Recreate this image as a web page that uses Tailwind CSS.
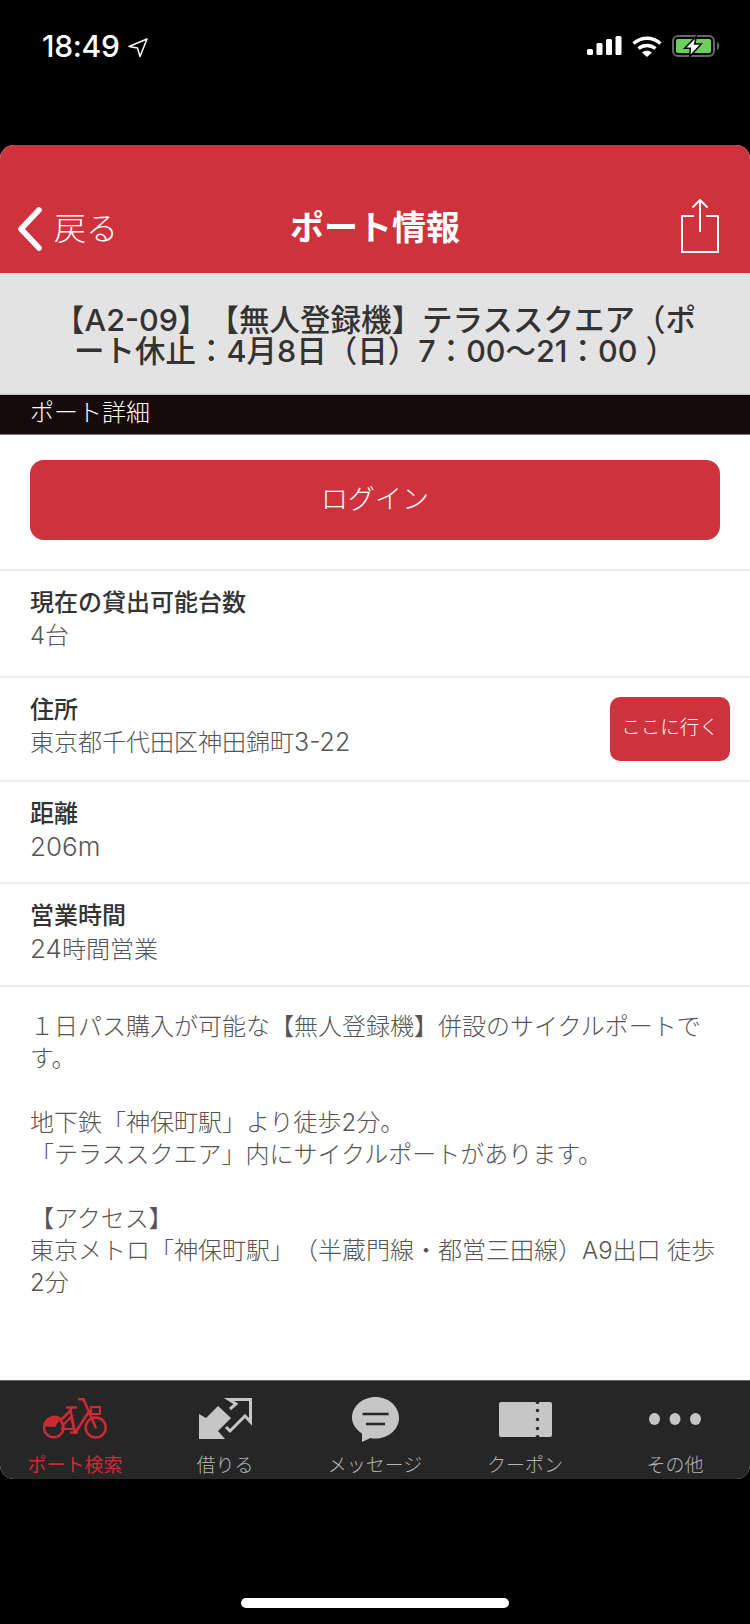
<!DOCTYPE html>
<html lang="ja">
<head>
  <meta charset="UTF-8" />
  <title>ポート情報</title>
  <script src="https://cdn.jsdelivr.net/npm/@tailwindcss/browser@4"></script>
</head>
<body class="bg-black w-[750px] h-[1624px] overflow-hidden font-['Inter','Noto_Sans_CJK_JP',sans-serif] [text-spacing-trim:space-all]">
  <!-- Status bar -->
  <div class="h-[145px] pt-[32px] pl-[42px] pr-[29px] flex items-start justify-between text-white">
    <div class="flex items-center gap-[8px] h-[28px]">
      <span class="text-[30px] leading-[28px] font-medium tracking-[-0.3px]">18:49</span>
      <svg class="mt-[3px]" width="20" height="20" viewBox="0 0 20 20"><path d="M1 8.500 19 1 12 18.500 9.500 10z" fill="none" stroke="#fff" stroke-width="1.500" stroke-linejoin="round"/></svg>
    </div>
    <div class="flex items-start gap-[10px] pt-[4px]">
      <svg width="35" height="20" viewBox="0 0 35 20" fill="#fff"><rect x="0" y="13" width="6" height="6" rx="1.500"/><rect x="9.500" y="7" width="6" height="12" rx="1.500"/><rect x="19" y="3" width="6" height="16" rx="1.500"/><rect x="28.500" y="0" width="6" height="19" rx="1.500"/></svg>
      <svg width="30" height="21" viewBox="0 0 30 21"><path d="M1.500 7.500c8-7 19-7 27 0M6.500 12.500c5-4 12-4 17 0" fill="none" stroke="#fff" stroke-width="3.500"/><path d="m10 16.500c3-2.500 7-2.500 10 0l-5 4.500z" fill="#fff"/></svg>
      <svg class="-mt-[1px]" width="49" height="22" viewBox="0 0 49 22"><rect x="1" y="1" width="41" height="20" rx="5" fill="none" stroke="#666" stroke-width="2"/><rect x="4" y="4" width="35" height="14" rx="2" fill="#6ad15f"/><path d="M45 7c3 1 3 7 0 8z" fill="#666"/><path d="M24.300 1.500 12.700 13.300h5.600l-.6 8.200L29.300 9h-6.600z" fill="#fff" stroke="#000" stroke-width="1.500"/></svg>
    </div>
  </div>

  <main class="w-[750px] h-[1334px] rounded-[14px] overflow-hidden bg-white flex flex-col">
    <!-- Nav -->
    <header class="h-[128px] shrink-0 bg-[#ce323c] text-white relative flex items-start pt-[59px]">
      <div class="flex items-center h-[50px] pl-[17px]">
        <svg width="26" height="44" viewBox="0 0 26 44"><path d="M22 3 4 22l18 19" fill="none" stroke="#fff" stroke-width="5.500" stroke-linecap="round" stroke-linejoin="round"/></svg>
        <span class="text-[32px] leading-[36px] ml-[11px] font-light">戻る</span>
      </div>
      <h1 class="absolute left-0 right-0 top-[61px] text-center text-[34px] leading-[44px] font-bold">ポート情報</h1>
      <svg class="absolute right-[31px] bottom-[20px]" width="38" height="54" viewBox="0 0 38 54"><path d="M13 17H1v36h36V17H25M19 1v32M11.500 8.500 19 1l7.500 7.500" fill="none" stroke="#fff" stroke-width="2"/></svg>
    </header>

    <!-- Port name -->
    <div class="h-[122px] shrink-0 bg-[#e3e3e3] border-b border-[#bdbdbd] flex items-center justify-center pt-[2px] text-center text-[30.500px] leading-[31px] font-medium text-[#333]">
      <p>【A2-09】【無人登録機】テラススクエア（ポ<br>ート休止：4月8日（日）7：00～21：00 ）</p>
    </div>
    <div class="h-[40px] shrink-0 bg-[#150b0c] border-b border-[#777] pl-[30px] text-[24px] leading-[36px] font-light text-white">ポート詳細</div>

    <!-- Login -->
    <div class="h-[136px] shrink-0 px-[30px] pt-[25px] border-b-2 border-[#ececec]">
      <button class="w-full h-[80px] rounded-[14px] bg-[#ce323c] text-white text-[27px] font-light">ログイン</button>
    </div>

    <!-- Details -->
    <div class="h-[107px] shrink-0 pl-[30px] pt-[15px] border-b-2 border-[#ececec]">
      <div class="text-[24px] leading-[33px] font-medium text-[#333]">現在の貸出可能台数</div>
      <div class="text-[24px] leading-[33px] font-light text-[#555]">4台</div>
    </div>
    <div class="h-[104px] shrink-0 pl-[30px] pr-[20px] pt-[15px] border-b-2 border-[#ececec] relative">
      <div class="text-[24px] leading-[33px] font-medium text-[#333]">住所</div>
      <div class="text-[24px] leading-[33px] font-light text-[#555]">東京都千代田区神田錦町<span class="text-[25px]">3-22</span></div>
      <button class="absolute right-[20px] top-[19px] w-[120px] h-[64px] pb-[2px] rounded-[10px] bg-[#ce323c] text-white text-[19.500px] font-light">ここに行く</button>
    </div>
    <div class="h-[102px] shrink-0 pl-[30px] pt-[15px] border-b-2 border-[#ececec]">
      <div class="text-[24px] leading-[33px] font-medium text-[#333]">距離</div>
      <div class="text-[26px] leading-[33px] font-light text-[#555]">206m</div>
    </div>
    <div class="h-[103px] shrink-0 pl-[30px] pt-[15px] border-b-2 border-[#ececec]">
      <div class="text-[24px] leading-[33px] font-medium text-[#333]">営業時間</div>
      <div class="text-[24px] leading-[33px] font-light text-[#555]"><span class="text-[26px]">24</span>時間営業</div>
    </div>

    <!-- Description -->
    <div class="flex-1 px-[30px] pt-[24px] text-[24px] leading-[32px] font-light text-[#555]">
      １日パス購入が可能な【無人登録機】併設のサイクルポートです。<br><br>地下鉄「神保町駅」より徒歩2分。<br>「テラススクエア」内にサイクルポートがあります。<br><br>【アクセス】<br>東京メトロ「神保町駅」（半蔵門線・都営三田線）A9出口 徒歩2分
    </div>

    <!-- Tab bar -->
    <nav class="h-[99px] shrink-0 bg-[#262626] border-t border-[#666] grid grid-cols-5 text-center text-[19px] leading-[22px] font-light text-[#b4b4b4]">
      <div class="flex flex-col items-center">
        <div class="h-[74px] pt-[17px]">
          <svg width="64" height="41" viewBox="0 0 64 41" fill="none" stroke="#ce2a35" stroke-width="2.500" stroke-linecap="round"><circle cx="10.700" cy="29.500" r="9.800"/><circle cx="52.700" cy="29.500" r="10"/><path d="M36 1.200h4.500L52.700 29.500M45 15 32 35M24 9.500h9M27 9.500l5 25M28 34.500h6M18 22l10-10"/><path d="M1 28.500A10.500 10.500 0 0 1 18 20l-6 9z" fill="#ce2a35" stroke="none"/><path d="M20 27l8-8 3 12H19z" fill="none" stroke-width="2"/><rect x="48" y="9" width="9" height="7" stroke-width="2"/></svg>
        </div>
        <span class="text-[#ce2a35] font-normal">ポート検索</span>
      </div>
      <div class="flex flex-col items-center">
        <div class="h-[74px] pt-[17px]">
          <svg width="53" height="41" viewBox="0 0 53 41"><path d="M0 41V16l7 4L19 8l13 12-13 13 7 8z" fill="#c6c6c6"/><path d="M31 11l6-5-7-4.500h21.500V24L46 18 31 33l-4-4" fill="none" stroke="#c6c6c6" stroke-width="3"/></svg>
        </div>
        <span>借りる</span>
      </div>
      <div class="flex flex-col items-center">
        <div class="h-[74px] pt-[16px]">
          <svg width="47" height="45" viewBox="0 0 47 45"><path d="M23.500 0C36.500 0 47 9.300 47 20.800S36.500 41.600 23.500 41.600c-2 0-3.500 0-5-.6L10 45v-8.500C4 32.500 0 27 0 20.800 0 9.300 10.500 0 23.500 0z" fill="#c6c6c6"/><path d="M10.600 17h26M14 27h19" stroke="#262626" stroke-width="2.500"/></svg>
        </div>
        <span>メッセージ</span>
      </div>
      <div class="flex flex-col items-center">
        <div class="h-[74px] pt-[21px]">
          <svg width="53" height="35" viewBox="0 0 53 35"><path d="M2 0h34.500a2 2 0 0 0 4 0H51a2 2 0 0 1 2 2v31a2 2 0 0 1-2 2H40.500a2 2 0 0 0-4 0H2a2 2 0 0 1-2-2V2a2 2 0 0 1 2-2z" fill="#c6c6c6"/><circle cx="38.500" cy="8.500" r="1.700" fill="#262626"/><circle cx="38.500" cy="17.500" r="1.700" fill="#262626"/><circle cx="38.500" cy="26.500" r="1.700" fill="#262626"/></svg>
        </div>
        <span>クーポン</span>
      </div>
      <div class="flex flex-col items-center">
        <div class="h-[74px] pt-[32px]">
          <svg width="52" height="12" viewBox="0 0 52 12" fill="#c6c6c6"><ellipse cx="5.500" cy="6" rx="5.500" ry="6"/><ellipse cx="26" cy="6" rx="5.500" ry="6"/><ellipse cx="46.500" cy="6" rx="5.500" ry="6"/></svg>
        </div>
        <span>その他</span>
      </div>
    </nav>
  </main>

  <!-- Home indicator -->
  <div class="w-[268px] h-[10px] rounded-full bg-white mx-auto mt-[119px]"></div>
</body>
</html>
